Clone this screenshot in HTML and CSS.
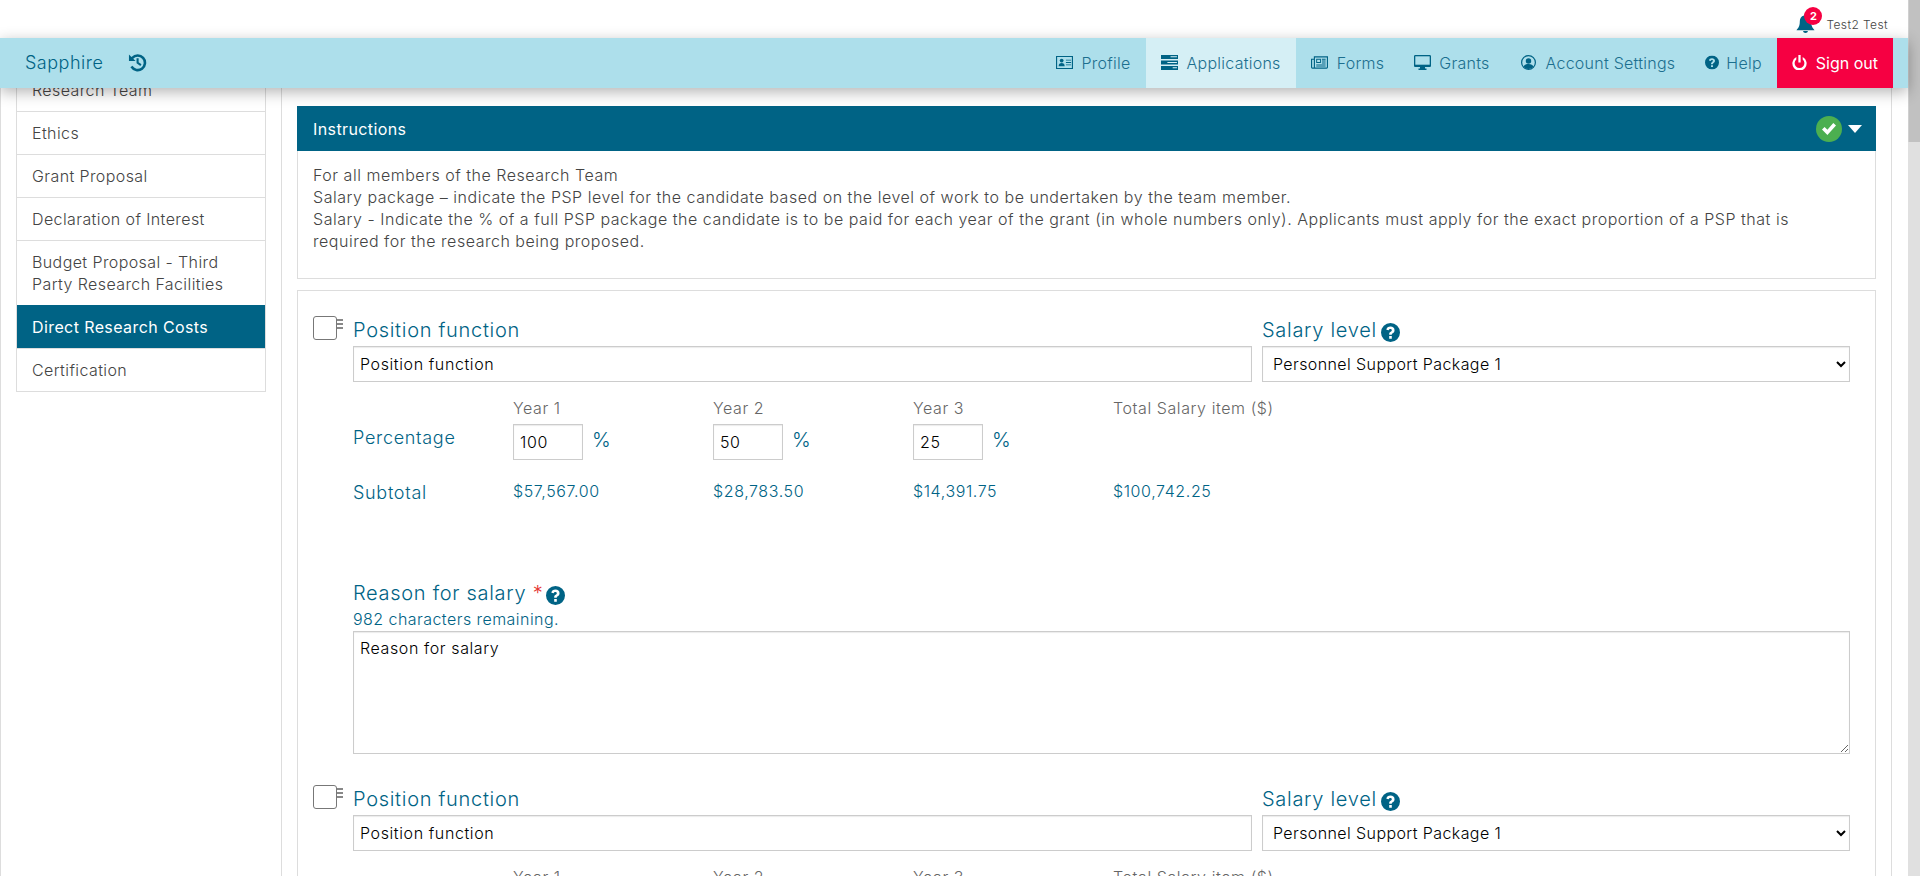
FILE: index.html
```html
<!DOCTYPE html>
<html lang="en">
<head>
  <meta charset="UTF-8">
  <title>Sapphire - Direct Research Costs</title>
  <link rel="stylesheet" href="styles.css">
</head>
<body>
  <div class="page">
    <div class="topbar">
      <span class="bell">
        <svg class="bell-icon" viewBox="0 0 20 20"><path d="M10 0c1 0 1.600.7 1.600 1.600C14.800 2.300 16 5 16 8c0 5 1.500 7 3.500 9H.5C2.500 15 4 13 4 8c0-3 1.200-5.700 4.400-6.400C8.400.7 9 0 10 0zM7.500 18h5c0 1.200-1.100 2-2.500 2s-2.500-.8-2.500-2z"/></svg>
        <span class="badge">2</span>
      </span>
      <span class="username">Test2 Test</span>
    </div>

    <nav class="navbar">
      <a class="brand">Sapphire</a>
      <svg class="history" viewBox="0 0 20 20"><path d="M3.600 4.200A9 9 0 1 1 2.500 15l2.200-1.500A6.300 6.300 0 1 0 5.500 6.100L8 8.500H1V1.500z"/><path d="M9 5.500h2.200v4.300l3 2-1.200 1.800-4-2.700z"/></svg>
      <div class="nav-items">
        <a class="nav-item">
          <svg class="nav-icon" viewBox="0 0 18 14"><path fill-rule="evenodd" d="M0 0h18v14H0zM1.200 1.200v11.600h15.600V1.200z"/><circle cx="6" cy="5" r="2"/><path d="M2.800 11c0-2.500 1.200-3.500 3.200-3.500s3.200 1 3.200 3.500zM10.500 4H16v1h-5.500zM10.500 6.500H16v1h-5.500zM10.500 9H16v1h-5.500z"/></svg>
          Profile
        </a>
        <a class="nav-item current">
          <svg class="nav-icon" viewBox="0 0 16 14"><path d="M0 0h16v3.600H0zM0 5.200h16v3.600H0zM0 10.400h16V14H0z"/><path fill="#d5eff5" d="M9 1h6v1H9zM6 6.500h9v1H6zM11 11.500h4v1h-4z"/></svg>
          Applications
        </a>
        <a class="nav-item">
          <svg class="nav-icon" viewBox="0 0 18 13"><path fill-rule="evenodd" d="M3 0h15v11.500a1.500 1.500 0 0 1-1.500 1.500H1.500A1.500 1.500 0 0 1 0 11.500V2.500h3zM4.200 1.200v10.600H16.800V1.200zM1.200 3.700v7.800c0 .2.100.3.300.3H3V3.700z"/><path fill-rule="evenodd" d="M5.500 2.500h5v4.500h-5zM6.500 3.500v2.500h3V3.500z"/><path d="M11.500 2.500h4v1h-4zM11.500 4.500h4v1h-4zM11.500 6.500h4v1h-4zM5.500 8.500h10v1h-10zM5.500 10h10v.8h-10z"/></svg>
          Forms
        </a>
        <a class="nav-item">
          <svg class="nav-icon grants-icon" viewBox="0 0 17 15"><path d="M1.300 0h14.400c.7 0 1.300.6 1.300 1.300v9.400c0 .7-.6 1.300-1.300 1.300H1.300C.6 12 0 11.400 0 10.700V1.300C0 .6.600 0 1.300 0zM6 12h5v1.500h1.500V15h-8v-1.500H6z"/><path fill="#addfeb" d="M1.300 1.300h14.400v8.400H1.300z"/></svg>
          Grants
        </a>
        <a class="nav-item">
          <svg class="nav-icon" viewBox="0 0 16 16"><path fill-rule="evenodd" d="M8 0a8 8 0 1 1 0 16A8 8 0 0 1 8 0zm0 1.300a6.700 6.700 0 1 0 0 13.400A6.700 6.700 0 0 0 8 1.300z"/><circle cx="8" cy="6.300" r="2.900"/><path d="M2.800 12.500c.6-2 2.200-3 5.200-3s4.600 1 5.200 3A6.700 6.700 0 0 1 8 15a6.700 6.700 0 0 1-5.200-2.500z"/></svg>
          Account Settings
        </a>
        <a class="nav-item">
          <svg class="nav-icon help-icon" viewBox="0 0 16 16"><use href="#help"/></svg>
          Help
        </a>
        <a class="nav-item signout">
          <svg class="nav-icon" viewBox="0 0 16 16"><path d="M6.800 0h2.400v8H6.800z"/><path d="M4.600 2.200v2.500a5.200 5.200 0 1 0 6.800 0V2.200a7.600 7.600 0 1 1-6.800 0z"/></svg>
          Sign out
        </a>
      </div>
    </nav>

    <div class="layout">
      <aside class="sidebar">
        <ul class="step-list">
          <li>Research Team</li>
          <li>Ethics</li>
          <li>Grant Proposal</li>
          <li>Declaration of Interest</li>
          <li>Budget Proposal - Third Party Research Facilities</li>
          <li class="active">Direct Research Costs</li>
          <li>Certification</li>
        </ul>
      </aside>

      <main class="content">
        <section class="instructions">
          <header class="instructions-head">
            <span>Instructions</span>
            <span class="head-icons">
              <span class="tick">
                <svg viewBox="0 0 16 14"><path d="M1 7.500l2.600-2.600 2.800 2.800L12.300 1 15 3.600 6.400 13z"/></svg>
              </span>
              <span class="caret"></span>
            </span>
          </header>
          <div class="instructions-body">
            For all members of the Research Team<br>
            Salary package – indicate the PSP level for the candidate based on the level of work to be undertaken by the team member.<br>
            Salary - Indicate the % of a full PSP package the candidate is to be paid for each year of the grant (in whole numbers only). Applicants must apply for the exact proportion of a PSP that is required for the research being proposed.
          </div>
        </section>

        <section class="panel">
          <article class="entry">
            <div class="drag-col"><span class="drag-box"></span><span class="drag-lines"></span></div>
            <div class="entry-body">
              <div class="top-fields">
                <label class="field-label">Position function</label>
                <label class="field-label">Salary level <svg class="help-badge" viewBox="0 0 16 16"><use href="#help"/></svg></label>
                <input class="text-input" type="text" value="Position function">
                <select class="text-input select-input"><option>Personnel Support Package 1</option></select>
              </div>
              <div class="years">
                <span></span>
                <span class="year-head">Year 1</span>
                <span class="year-head">Year 2</span>
                <span class="year-head">Year 3</span>
                <span class="year-head">Total Salary item ($)</span>
                <span class="row-label">Percentage</span>
                <span class="pct"><input class="text-input pct-input" type="text" value="100"><span class="pct-sign">%</span></span>
                <span class="pct"><input class="text-input pct-input" type="text" value="50"><span class="pct-sign">%</span></span>
                <span class="pct"><input class="text-input pct-input" type="text" value="25"><span class="pct-sign">%</span></span>
                <span></span>
                <span class="row-label subtotal-label">Subtotal</span>
                <span class="money">$57,567.00</span>
                <span class="money">$28,783.50</span>
                <span class="money">$14,391.75</span>
                <span class="money">$100,742.25</span>
              </div>
              <label class="field-label reason-label">Reason for salary <span class="req">*</span> <svg class="help-badge" viewBox="0 0 16 16"><use href="#help"/></svg></label>
              <div class="remaining">982 characters remaining.</div>
              <textarea class="text-input reason">Reason for salary</textarea>
            </div>
          </article>

          <article class="entry">
            <div class="drag-col"><span class="drag-box"></span><span class="drag-lines"></span></div>
            <div class="entry-body">
              <div class="top-fields">
                <label class="field-label">Position function</label>
                <label class="field-label">Salary level <svg class="help-badge" viewBox="0 0 16 16"><use href="#help"/></svg></label>
                <input class="text-input" type="text" value="Position function">
                <select class="text-input select-input"><option>Personnel Support Package 1</option></select>
              </div>
              <div class="years">
                <span></span>
                <span class="year-head">Year 1</span>
                <span class="year-head">Year 2</span>
                <span class="year-head">Year 3</span>
                <span class="year-head">Total Salary item ($)</span>
              </div>
            </div>
          </article>
        </section>
      </main>
    </div>
  </div>
  <div class="scrollbar"><div class="scroll-thumb"></div></div>

  <svg class="defs" width="0" height="0">
    <symbol id="help" viewBox="0 0 16 16">
      <path fill-rule="evenodd" d="M8 0a8 8 0 1 1 0 16A8 8 0 0 1 8 0zM6.900 11v2.200h2.200V11zM8 3C6 3 4.800 4 4.500 5.600l2 .6C6.700 5.400 7.200 5 7.900 5c.7 0 1.200.4 1.200 1 0 .5-.3.800-1 1.300-.9.600-1.200 1.200-1.200 2v.6h2.200V9.500c0-.3.200-.5.800-.9 1-.7 1.500-1.400 1.500-2.600C11.400 4.200 10 3 8 3z"/>
    </symbol>
  </svg>
</body>
</html>
```

FILE: styles.css
```css
* {
  box-sizing: border-box;
}

html, body {
  height: 100%;
}

body {
  margin: 0;
  display: flex;
  overflow: hidden;
  background: #ffffff;
  font-family: "Inter", "Liberation Sans", sans-serif;
  font-weight: 300;
  font-size: 16px;
  letter-spacing: 0.58px;
  color: #444444;
}

.page {
  width: 1908px;
  height: 876px;
  display: flex;
  flex-direction: column;
}

.defs {
  position: absolute;
}

/* scrollbar strip */
.scrollbar {
  width: 12px;
  height: 876px;
  background: #e0e0e0;
}

.scroll-thumb {
  height: 142px;
  background: #c1c1c1;
  border-left: 1px solid #d0d0d0;
}

/* top strip */
.topbar {
  height: 38px;
  flex: none;
  display: flex;
  justify-content: flex-end;
  align-items: flex-end;
  padding: 0 20px 6px 0;
}

.bell {
  position: relative;
  width: 19px;
  height: 19px;
  margin-right: 11px;
  margin-bottom: -1px;
}

.bell-icon {
  display: block;
  width: 19px;
  height: 19px;
  fill: #006385;
}

.badge {
  position: absolute;
  left: 8px;
  top: -7px;
  width: 18px;
  height: 18px;
  border-radius: 50%;
  background: #f60042;
  color: #ffffff;
  font-size: 11px;
  font-weight: 700;
  letter-spacing: 0;
  line-height: 18px;
  text-align: center;
}

.username {
  font-size: 12px;
  letter-spacing: 0.4px;
  line-height: 14px;
  color: #444444;
}

/* main nav */
.navbar {
  height: 50px;
  flex: none;
  display: flex;
  align-items: center;
  position: relative;
  z-index: 5;
  padding-left: 25px;
  background: #addfeb;
  box-shadow: 0 4px 14px rgba(0, 0, 0, 0.3);
}

.brand {
  font-size: 18px;
  color: #006385;
  letter-spacing: 0.5px;
  padding-bottom: 1px;
}

.history {
  width: 19px;
  height: 19px;
  margin-left: 25px;
  margin-bottom: 2px;
  fill: #006385;
}

.nav-items {
  margin-left: auto;
  margin-right: 15px;
  height: 100%;
  display: flex;
}

.nav-item {
  display: flex;
  align-items: center;
  padding: 0 15px 1px;
  color: #1c6f8f;
  font-size: 16px;
  letter-spacing: 0.25px;
}

.nav-item.current {
  background: #d5eff5;
}

.nav-item.signout {
  background: #f60042;
  color: #ffffff;
  font-weight: 400;
  letter-spacing: 0;
}

.nav-icon {
  width: 17px;
  height: 15px;
  margin-right: 9px;
  fill: #006385;
}

.signout .nav-icon {
  width: 15px;
  fill: #ffffff;
}

.grants-icon {
  margin-right: 8px;
}

.help-icon {
  width: 14px;
  margin-right: 7px;
}

/* body layout */
.layout {
  flex: 1;
  min-height: 0;
  display: flex;
  overflow: hidden;
  border-left: 1px solid #dddddd;
}

.sidebar {
  width: 281px;
  flex: none;
  padding-left: 15px;
  border-right: 1px solid #dddddd;
}

.step-list {
  list-style: none;
  width: 250px;
  margin: -20px 0 0;
  padding: 0;
  border: 1px solid #dddddd;
  border-top: 0;
}

.step-list li {
  padding: 10px 15px;
  line-height: 22px;
  letter-spacing: 0.4px;
  border-top: 1px solid #dddddd;
}

.step-list li.active {
  background: #006385;
  border-top-color: #006385;
  color: #ffffff;
  font-weight: 400;
}

.content {
  width: 1610px;
  flex: none;
  padding: 18px 15px 0;
  border-right: 1px solid #dddddd;
}

/* instructions box */
.instructions {
  height: 173px;
  border: 1px solid #dddddd;
  border-top: 0;
  margin-bottom: 11px;
}

.instructions-head {
  height: 45px;
  margin: 0 -1px;
  padding: 0 14px 0 16px;
  display: flex;
  justify-content: space-between;
  align-items: center;
  background: #006385;
  color: #ffffff;
  font-weight: 400;
  letter-spacing: 0.4px;
}

.head-icons {
  display: flex;
  align-items: center;
}

.tick {
  width: 26px;
  height: 26px;
  border-radius: 50%;
  background: #4caf50;
  display: flex;
  align-items: center;
  justify-content: center;
  margin-right: 6px;
}

.tick svg {
  width: 16px;
  height: 14px;
  fill: #ffffff;
}

.caret {
  width: 0;
  height: 0;
  border-left: 7.5px solid transparent;
  border-right: 7.5px solid transparent;
  border-top: 8px solid #ffffff;
}

.instructions-body {
  padding: 13px 15px 0;
  line-height: 22px;
  letter-spacing: 0.52px;
}

/* position entries */
.panel {
  border: 1px solid #dddddd;
  padding: 29px 24px 0 15px;
}

.entry {
  display: flex;
  margin-bottom: 35px;
}

.drag-col {
  width: 40px;
  flex: none;
  display: flex;
  align-items: flex-start;
  margin-top: -4px;
}

.drag-box {
  width: 24px;
  height: 24px;
  border: 1px solid #777777;
  border-radius: 3px;
}

.drag-lines {
  width: 6px;
  height: 10px;
  margin-top: 3px;
  background: repeating-linear-gradient(#888888 0 2px, transparent 2px 4px);
}

.entry-body {
  width: 1497px;
}

.top-fields {
  display: grid;
  grid-template-columns: 899px 588px;
  column-gap: 10px;
  grid-template-rows: 26px 36px;
}

.field-label {
  font-size: 20px;
  line-height: 20px;
  letter-spacing: 0.7px;
  color: #006385;
}

.help-badge {
  width: 19px;
  height: 19px;
  margin-left: -2px;
  vertical-align: -5px;
  fill: #006385;
}

.text-input {
  height: 36px;
  width: 100%;
  padding: 0 6px;
  background: #ffffff;
  border: 1px solid #cccccc;
  border-radius: 0;
  box-shadow: inset 0 1px 1px rgba(0, 0, 0, 0.08);
  font-family: inherit;
  font-size: 16px;
  font-weight: 300;
  letter-spacing: 0.6px;
  color: #000000;
}

.select-input {
  letter-spacing: 0.4px;
}

.years {
  display: grid;
  grid-template-columns: 160px 200px 200px 200px 240px;
  grid-template-rows: 22px 36px 42px;
  row-gap: 5px;
  margin-top: 15px;
}

.year-head {
  line-height: 22px;
  color: #666666;
}

.row-label {
  font-size: 18px;
  line-height: 26px;
  letter-spacing: 0.7px;
  align-self: center;
  padding-bottom: 9px;
  color: #006385;
}

.subtotal-label {
  align-self: start;
  padding-top: 15px;
  padding-bottom: 0;
}

.pct {
  display: flex;
  align-items: center;
  gap: 9px;
  color: #006385;
}

.pct-sign {
  font-size: 20px;
  padding-bottom: 4px;
}

.pct-input {
  width: 70px;
}

.money {
  padding-top: 16px;
  letter-spacing: 0.6px;
  color: #006385;
}

.reason-label {
  display: block;
  line-height: 26px;
  margin-top: 73px;
}

.reason-label .help-badge {
  margin-left: -4px;
}

.remaining {
  line-height: 22px;
  margin-top: 2px;
  margin-bottom: 1px;
  letter-spacing: 0.45px;
  color: #006385;
}

.reason {
  display: block;
  height: 123px;
  padding-top: 5px;
  line-height: 22px;
  resize: vertical;
}

.req {
  color: #e53935;
}
```
